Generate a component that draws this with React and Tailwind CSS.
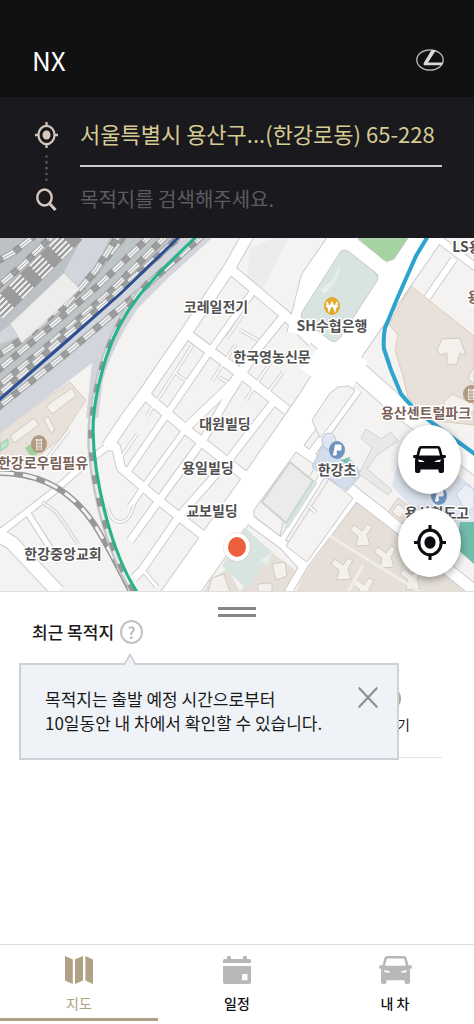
import { useState } from 'react';

// width, points
const STREETS = [
    [32, '165,614 260,480 312,405 350,345 428,232'],
    [15, '320,220 400,282'],
    [18, '300,322 348,362 400,408 480,468'],
    [26, '352,225 314,280 300,335'],
    [11, '251,230 230,267 186,333 144,394 125,420 107,447'],
    [6, '107,447 88,461 53,492 -4,536'],
    [9, '228,267 284,314 312,342'],
    [9, '186,333 210,351 240,373 287,410'],
    [9, '144,394 183,427 227,462 250,480'],
    [8, '108,446 116,447 121,468 157,499 205,537'],
    [6, '254,290 210,351 167,414 126,474'],
    [8, '284,316 254,353 232,384 187,427'],
    [5, '187,427 145,485 130,507'],
    [7, '254,355 226,400 203,440 160,499 130,541'],
    [7, '275,400 227,462 180,515 142,570 134,578'],
    [3, '142,569 157,587'],
    [11, '284,438 322,466 357,495 401,529 451,572 476,592'],
    [9, '246,517 284,545 304,567'],
    [7, '357,495 304,565 286,596'],
    [5, '322,476 279,545'],
    [13, '-6,532 12,543 58,592'],
    [5, '27,512 59,562'],
    [7, '437,238 480,270'],
    [6, '454,259 427,298'],
    [7, '358,390 326,434 304,462'],
    [8, '322,414 302,440'],
];

const LANES = [
    '192,346 147,416',
    '174,372 186,381',
    '137,434 118,462',
    '236,344 212,381',
    '272,360 246,400',
    '283,372 264,398',
    '258,340 240,330',
    '69,430 44,462',
    '230,384 219,377',
    '247,308 227,338',
];

// side tracks of the rail yard
const TRACKS = [
    'M-4 409 L62 357 L130 300 L202 236',
    'M-4 388 L50 344 L110 292 L166 236',
    'M-4 372 L42 334 L100 284 L150 236',
    'M-4 357 L30 334 L84 286 L124 236',
    'M-4 397 L60 341 L112 297 L178 238',
    'M60 312 L96 270 L118 236',
    'M-4 288 L22 266 L52 236',
    'M-4 262 L14 252 L34 236',
];

const LABELS = [
    { text: '코레일전기', x: 216, y: 312 },
    { text: 'SH수협은행', x: 332, y: 331 },
    { text: '한국영농신문', x: 272, y: 362 },
    { text: '대원빌딩', x: 225, y: 429 },
    { text: '용일빌딩', x: 208, y: 473 },
    { text: '교보빌딩', x: 212, y: 516 },
    { text: '한강초', x: 337, y: 475 },
    { text: '한강중앙교회', x: 63, y: 559 },
    { text: '용산철도고', x: 437, y: 518 },
    { text: 'LS용', x: 467, y: 252 },
    { text: '용산센트럴파크', x: 426, y: 418, brown: true },
    { text: '한강로우림필유', x: 43, y: 468, brown: true },
    { text: '용', x: 474, y: 302, brown: true },
];

const TOWERS = [
    [362, 536], [386, 558], [343, 570], [412, 580], [364, 590],
];

function TargetIcon({ className }) {
    return (
        <svg viewBox="0 0 24 26" preserveAspectRatio="none" className={className} fill="none" stroke="currentColor" aria-hidden="true">
            <ellipse cx="12" cy="13" rx="8.400" ry="9.200" strokeWidth="2.300" />
            <ellipse cx="12" cy="13" rx="4.200" ry="4.600" fill="currentColor" stroke="none" />
            <path d="M12 0v4M12 22v4M0 13h4M20 13h4" strokeWidth="2.300" />
        </svg>
    );
}

function CarIcon({ className }) {
    return (
        <svg viewBox="0 0 33 27" preserveAspectRatio="none" className={className} fill="currentColor" aria-hidden="true">
            <path
                fillRule="evenodd"
                d="M8 0H25Q27 0 27.600 2L29.500 9H32Q33 9 33 10.500T31.500 12.200H30.500L31 14V25Q31 27 29 27H27.500Q25.500 27 25.500 25V23.500H7.500V25Q7.500 27 5.500 27H4Q2 27 2 25V14L2.500 12.200H1.500Q0 12 0 10.500T1 9H3.500L5.400 2Q6 0 8 0ZM8.600 2.400Q8 2.400 7.800 3.200L6 9.400H27L25.200 3.200Q25 2.400 24.400 2.400ZM5 13.400L6 16H11.500Q11 14 5 13.400ZM28 13.400Q22 14 21.500 16H27Z"
            />
        </svg>
    );
}

function SearchIcon() {
    return (
        <svg viewBox="0 0 21 23" className="h-[23px] w-[21px]" fill="none" stroke="currentColor" aria-hidden="true">
            <ellipse cx="8.500" cy="9.500" rx="7.200" ry="8" strokeWidth="2.400" />
            <path d="M13.500 15.500L19.500 22" strokeWidth="3" />
        </svg>
    );
}

function MapIcon() {
    return (
        <svg viewBox="0 0 28 28" className="h-7 w-7" fill="currentColor" aria-hidden="true">
            <path d="M0 0L7.800 3.500V28L0 24.500ZM10 3.500L18 0V24.500L10 28ZM20.400 0L28 3.500V28L20.400 24.500Z" />
        </svg>
    );
}

function CalendarIcon() {
    return (
        <svg viewBox="0 0 28 28" className="h-7 w-7" fill="currentColor" aria-hidden="true">
            <path d="M1.500 3H4V1Q4 0 5 0H7Q8 0 8 1V3H20V1Q20 0 21 0H23Q24 0 24 1V3H26.500Q28 3 28 4.500V7H0V4.500Q0 3 1.500 3Z" />
            <path fillRule="evenodd" d="M0 10H28V26Q28 28 26 28H2Q0 28 0 26ZM19 18V24.200H24.500V18Z" />
        </svg>
    );
}

function LexusLogo() {
    return (
        <svg viewBox="0 0 28 22" className="h-[22px] w-7" fill="none" role="img" aria-label="Lexus">
            <ellipse cx="14" cy="11" rx="13.200" ry="10.200" stroke="#bdbdbd" strokeWidth="1.300" />
            <path d="M15.500 1L20 1.300L12 13.500H26.800L26 16.200H8Q7 15.500 8 13.500Z" fill="#d9d9d9" />
        </svg>
    );
}

function StreetMap() {
    return (
        <svg viewBox="0 238 474 353" className="block w-full" role="img" aria-label="지도">
            <rect x="0" y="238" width="474" height="353" fill="#f4f3f2" />

            {/* ground areas */}
            <path d="M250 248L274 238L289 238L276 262L262 291L247 280Z" fill="#ececeb" />
            <path d="M0 433L22 416L70 382L86 400L62 437L22 470L0 474Z" fill="#e7e1da" stroke="#decfc0" />
            <path d="M411 286L474 336V425L436 421L408 398L403 376L395 350L398 335L389 324Z" fill="#e7e1da" stroke="#decbb8" />
            <path d="M359 498L401 533L456 580L468 592H296L304 574Z" fill="#e5dfd8" />
            <path d="M266 548L298 572L286 592H240Z" fill="#e5dfd8" />
            <path d="M210 580L228 568L240 592H204Z" fill="#e5dfd8" />

            {STREETS.map(([w, pts]) => (
                <polyline key={pts} points={pts} fill="none" stroke="#cdcdcd" strokeWidth={w + 2} strokeLinejoin="round" />
            ))}
            {LANES.map((pts) => (
                <polyline key={pts} points={pts} fill="none" stroke="#d4d4d4" strokeWidth="4" />
            ))}
            {LANES.map((pts) => (
                <polyline key={pts} points={pts} fill="none" stroke="#fafafa" strokeWidth="2" />
            ))}
            {STREETS.map(([w, pts]) => (
                <polyline key={pts} points={pts} fill="none" stroke="#fff" strokeWidth={w} strokeLinejoin="round" />
            ))}
            <path d="M329 336L368 362L344 400L300 368Z" fill="#fff" />

            {/* parks */}
            <path d="M341 251Q344 249 348 251L376 273Q379 277 377 281L340 338Q335 344 330 340L303 320Q300 316 302 312Z" fill="#d8e4df" stroke="#c9c9c9" />
            <path d="M341 264L332 280L320 290L324 294L333 286L338 277Z" fill="#e6edea" />
            <path d="M358 238L384 260Q389 262 394 259L408 238Z" fill="#a5d3a1" stroke="#b8cbb5" />
            <path d="M244 527L272 552L247 589L222 566Z" fill="#d8e4df" />
            <path d="M272 552L260 560L268 566Z" fill="#e6edea" />

            {/* plots along the main road */}
            <path d="M338 387L349 386L355 391L331 424L320 438L312 420L330 393Z" fill="#f4f3f2" stroke="#c9c9c9" strokeLinejoin="round" />
            <path d="M296 452L316 466L285 514L280 536L254 516V510Z" fill="#f4f3f2" stroke="#c9c9c9" />
            <path d="M290 462L313 481L286 523L262 502Z" fill="#ebebea" stroke="#c9d6d0" strokeWidth="2" />
            <path d="M316 482L286 528" stroke="#d5e3dd" strokeWidth="4" />
            <path d="M329 479L353 498L307 562L286 546Z" fill="#f4f3f2" stroke="#c9c9c9" />
            <path d="M309 506L316 513" stroke="#cdcdcd" strokeWidth="4" />
            <path d="M309 506L316 513" stroke="#fff" strokeWidth="2" />

            {/* schools */}
            <path d="M322 446L362 474L347 491L312 467Z" fill="#d3dcea" stroke="#bfcbdb" />
            <ellipse cx="329" cy="441" rx="7" ry="8" fill="#dfe6ef" stroke="#b9c8dd" />
            <path d="M340 464L349 457L361 472L354 480Z" fill="#c6d3e6" />
            <path d="M341 460L350 457L347 465Z" fill="#79c2ad" />
            <path d="M366 429L381 439L391 432L398 441L377 455L367 469L392 490L388 495L359 474L372 448L361 438Z" fill="#e8e8e7" stroke="#d2d2d2" />
            <path d="M404 440L452 470L474 488V540L458 548L420 516L392 486Z" fill="#dde4ee" />
            <path d="M456 494L466 484L474 490V508L466 512Z" fill="#eaf0f5" stroke="#c3cfe0" />
            <path d="M460 522H474V564L456 548Z" fill="#72bcac" />
            <path d="M398 498L412 508L402 524L388 512Z" fill="#e7e1da" stroke="#d8cfc5" />
            <path d="M398 504L406 510L400 518L392 512Z" fill="#f4f1ee" stroke="#d8cfc5" />

            {/* buildings */}
            <g fill="#f4f1ec" stroke="#d3cbc2">
                <path d="M442 339L460 338L464 350L466 356L460 353L457 364L447 365L447 353L440 355L437 350Z" />
                <path d="M474 366L468 378L474 384Z" />
                <path d="M444 402L452 394L474 404V412H444Z" />
                <path d="M46 406L72 388L76 396L52 414Z" />
                <path d="M10 436L34 418L39 425L14 443Z" />
                <path d="M44 420L48 416L55 430L51 433Z" />
                <path d="M272 564L285 562L287 576L276 580Z" />
                <path d="M258 584L272 583V592H258Z" />
                <path d="M212 578L224 574L230 592H208Z" />
                {TOWERS.map(([x, y]) => (
                    <path
                        key={x}
                        d={`M${x - 6} ${y + 10}L${x - 4} ${y}L${x - 12} ${y - 6}L${x - 8} ${y - 11}L${x} ${y - 5}L${x + 5} ${y - 12}L${x + 10} ${y - 10}L${x + 5} ${y - 1}L${x + 8} ${y + 9}Z`}
                    />
                ))}
            </g>
            <path d="M330 536L420 592" stroke="#f0ece7" strokeWidth="3" />
            <path d="M363 565L348 592" stroke="#f0ece7" strokeWidth="3" />
            <path d="M0 444L8 439V446L0 451Z" fill="#bfe3cd" stroke="#92cdaa" />
            <path d="M25 448L34 442L42 450L32 458Z" fill="#a2cfa0" />
            <path d="M42 502L56 512L66 526L78 544" fill="none" stroke="#d4d4d4" strokeWidth="4" />
            <path d="M42 502L56 512L66 526L78 544" fill="none" stroke="#f4f3f2" strokeWidth="2" />
            <path d="M108 508Q112 523 121 522T134 505" fill="none" stroke="#d4d4d4" strokeWidth="4" />
            <path d="M108 508Q112 523 121 522T134 505" fill="none" stroke="#f8f8f8" strokeWidth="2" />

            {/* rail yard */}
            <path d="M0 238H212L166 280L138 308Q113 345 103 380L98 418H86L92 363L0 433Z" fill="#d2d5db" />
            <path d="M0 238H82L64 272L10 325L0 332Z" fill="#bcc1c5" />
            <path d="M110 238H182L60 346L0 390V344L40 328L84 290Z" fill="#bfc4c7" />
            <path d="M-4 312L76 232" stroke="#9b9b9b" strokeWidth="20" />
            <g stroke="#f3f3f3" strokeWidth="2" strokeDasharray="16 12" fill="none">
                <path d="M-10 306L70 226" />
                <path d="M-7 309L73 229" />
                <path d="M-4 312L76 232" />
                <path d="M-1 315L79 235" />
                <path d="M2 318L82 238" />
            </g>
            {TRACKS.map((d) => (
                <g key={d} fill="none">
                    <path d={d} stroke="#afb3b5" strokeWidth="7" />
                    <path d={d} stroke="#999" strokeWidth="7" strokeDasharray="8 13" />
                    <path d={d} stroke="#f4f4f4" strokeWidth="4" strokeDasharray="13 8" strokeDashoffset="13" />
                    <path d={d} stroke="#aaa" strokeWidth="1" />
                </g>
            ))}
            <path d="M76 262L98 238H110L90 268L72 288L60 276Z" fill="#d2d5db" />
            <path d="M10 324L64 273L80 289L22 343Z" fill="#ededeb" stroke="#c8ccce" />
            <path d="M-2 401L60 347L120 294L180 236" fill="none" stroke="#2b4f92" strokeWidth="3" />

            {/* branch line */}
            <g fill="none">
                <path d="M0 473Q58 473 92 521Q104 538 131 592" stroke="#979797" strokeWidth="6" />
                <path d="M0 473Q58 473 92 521Q104 538 131 592" stroke="#f4f4f4" strokeWidth="3" strokeDasharray="14 9" />
                <path d="M148 282C122 312 106 345 98 382C91 412 90 432 91 448C94 490 108 550 134 592" stroke="#c4c7cb" strokeWidth="7" />
                <path d="M148 282C122 312 106 345 98 382C91 412 90 432 91 448C94 490 108 550 134 592" stroke="#979797" strokeWidth="5" strokeDasharray="9 14" />
                <path d="M148 282C122 312 106 345 98 382C91 412 90 432 91 448C94 490 108 550 134 592" stroke="#eee" strokeWidth="2" strokeDasharray="14 9" strokeDashoffset="14" />
                <path d="M197 236C152 279 122 306 106 358C96 390 93 412 93 430C94 478 110 550 137 592" stroke="#27b38a" strokeWidth="3" />
                <path d="M428 236L416 256L397 299L385 328Q383 338 384 349L391 370L401 394Q410 406 431 422L476 455" stroke="#2fa3cf" strokeWidth="4" />
            </g>

            {/* place markers */}
            <ellipse cx="332" cy="306" rx="8" ry="9" fill="#e3a92c" />
            <path d="M327 302L329 310L332 303L335 310L337 302M326 306H338" fill="none" stroke="#fff" strokeWidth="2" />
            <g fill="#6f93bf">
                <ellipse cx="337" cy="450" rx="8" ry="9" />
                <ellipse cx="439" cy="496" rx="8" ry="9" />
            </g>
            <g stroke="#fff" strokeWidth="1" fill="#fff">
                <path d="M335 445H341V450H336V455H333M336 455V445" />
                <path d="M437 491H443V496H438V501H435M438 501V491" />
            </g>
            <g fill="#b29a83">
                <ellipse cx="39" cy="444" rx="8" ry="9" />
                <ellipse cx="471" cy="394" rx="8" ry="9" />
            </g>
            <g fill="#fff">
                <rect x="36" y="439" width="6" height="11" />
                <rect x="468" y="389" width="6" height="11" />
            </g>
            <g stroke="#b29a83" strokeWidth="1">
                <path d="M36 442H42M36 445H42M36 448H42M38 439V450M40 439V450" />
                <path d="M468 392H474M468 395H474M468 398H474M470 389V400M472 389V400" />
            </g>

            <g
                className="font-bold"
                fontSize="14"
                textAnchor="middle"
                stroke="#fff"
                strokeWidth="3"
                strokeLinejoin="round"
                paintOrder="stroke"
            >
                {LABELS.map((l) => (
                    <text key={l.text} x={l.x} y={l.y} fill={l.brown ? '#7a6259' : '#505050'}>
                        {l.text}
                    </text>
                ))}
            </g>

            {/* current position */}
            <ellipse cx="237" cy="547" rx="14" ry="15" fill="#e8603c" opacity="0.15" />
            <ellipse cx="237" cy="547" rx="13" ry="14" fill="#fff" />
            <ellipse cx="237" cy="547" rx="9" ry="10" fill="#ec5f3c" />
        </svg>
    );
}

const TABS = [
    { id: 'map', label: '지도', icon: <MapIcon /> },
    { id: 'schedule', label: '일정', icon: <CalendarIcon /> },
    { id: 'car', label: '내 차', icon: <CarIcon className="h-7 w-[33px]" /> },
];

export default function App() {
    const [tab, setTab] = useState('map');
    const [showTip, setShowTip] = useState(true);
    const [query, setQuery] = useState('');

    return (
        <div className="flex min-h-screen flex-col bg-white font-['Noto_Sans_CJK_KR',sans-serif] text-[#1a1a1a]">
            <header className="flex items-center justify-between bg-[#111] pt-[42px] pr-[30px] pb-[19px] pl-8">
                <h1 className="text-[26px] leading-9 text-white">NX</h1>
                <LexusLogo />
            </header>

            <form className="flex gap-[22px] bg-[#1a191e] pr-8 pb-2 pl-[35px]" onSubmit={(e) => e.preventDefault()}>
                <div className="flex flex-col items-center pt-[25px] text-[#d5c9bd]">
                    <TargetIcon className="h-[26px] w-[23px]" />
                    <svg viewBox="0 0 3 26" className="my-[7px] h-[26px] w-[3px]" aria-hidden="true">
                        <path d="M1.500 1.500V26" stroke="#5d5b61" strokeWidth="2.500" strokeLinecap="round" strokeDasharray="0.100 5.700" />
                    </svg>
                    <SearchIcon />
                </div>
                <div className="min-w-0 flex-1">
                    <input
                        type="text"
                        aria-label="출발지"
                        defaultValue="서울특별시 용산구...(한강로동) 65-228"
                        className="h-[70px] w-full border-b-2 border-[#cfcbd3] pt-1 text-[22px] text-[#d6cb93] outline-none"
                    />
                    <input
                        type="text"
                        aria-label="목적지"
                        value={query}
                        onChange={(e) => setQuery(e.target.value)}
                        placeholder="목적지를 검색해주세요."
                        className="h-[63px] w-full text-[20px] text-[#d6cb93] outline-none placeholder:text-[#5d5c60]"
                    />
                </div>
            </form>

            <main className="flex flex-1 flex-col">
                <div className="relative overflow-hidden">
                    <StreetMap />
                    <div className="absolute right-[13px] bottom-[14px] flex flex-col gap-[14px] text-[#0c0b10]">
                        <button type="button" aria-label="내 차 위치" className="flex h-[69px] w-[63px] items-center justify-center rounded-[50%] bg-white shadow-[0_2px_8px_rgba(0,0,0,0.4)]">
                            <CarIcon className="h-[27px] w-[33px]" />
                        </button>
                        <button type="button" aria-label="현재 위치" className="flex h-[69px] w-[63px] items-center justify-center rounded-[50%] bg-white shadow-[0_2px_8px_rgba(0,0,0,0.4)]">
                            <TargetIcon className="h-[35px] w-8" />
                        </button>
                    </div>
                </div>

                <section className="relative flex-1 border-t border-[#dedede] pt-[15px]">
                    <div className="mx-auto h-[10px] w-[38px] border-y-3 border-[#868686]" />
                    <div className="mt-[3px] flex items-center gap-[6px] px-8">
                        <h2 className="text-[17px] leading-6 font-medium">최근 목적지</h2>
                        <button
                            type="button"
                            aria-label="도움말"
                            onClick={() => setShowTip(!showTip)}
                            className="flex h-6 w-[23px] items-center justify-center rounded-[50%] border-2 border-[#c2c2c2] text-[16px] leading-5 font-medium text-[#b5b5b5]"
                        >
                            ?
                        </button>
                    </div>

                    <div className="relative">
                        <div className="mx-8 flex h-[114px] flex-col items-end border-b border-[#e3e3e3] pt-[43px] pr-8 text-[14px] leading-5">
                            <span className="mr-[9px] h-[23px] w-[22px] rounded-[50%] bg-[#b5a58c]" />
                            <span className="mt-1">기</span>
                        </div>

                        {showTip && (
                            <div className="absolute top-[19px] right-[75px] left-[19px] flex h-[97px] items-start justify-between border-2 border-[#cdd0d7] bg-[#eff3f7] pt-[22px] pr-[19px] pl-6">
                                <svg viewBox="0 0 14 13" className="absolute -top-[12px] left-[102px] h-[13px] w-[14px]" aria-hidden="true">
                                    <path d="M1 12L7 1.500L13 12V13H1Z" fill="#eff3f7" />
                                    <path d="M1 12L7 1.500L13 12" fill="none" stroke="#c6c9d0" strokeWidth="1.500" />
                                </svg>
                                <p className="text-[17px] leading-6">
                                    목적지는 출발 예정 시간으로부터
                                    <br />
                                    10일동안 내 차에서 확인할 수 있습니다.
                                </p>
                                <button type="button" aria-label="닫기" onClick={() => setShowTip(false)}>
                                    <svg viewBox="0 0 20 21" className="h-[21px] w-5" fill="none" stroke="#919191" strokeWidth="2.300" strokeLinecap="round">
                                        <path d="M1.300 1.300L18.700 19.700M18.700 1.300L1.300 19.700" />
                                    </svg>
                                </button>
                            </div>
                        )}
                    </div>
                </section>
            </main>

            <nav className="grid grid-cols-3 border-t border-[#dedede] pb-[3px]">
                {TABS.map((t) => (
                    <button
                        key={t.id}
                        type="button"
                        onClick={() => setTab(t.id)}
                        className={`flex flex-col items-center gap-[7px] border-b-3 pt-[11px] pb-[3px] text-[14px] leading-6 ${tab === t.id ? 'border-[#b0a085]' : 'border-transparent'}`}
                    >
                        <span className={tab === t.id ? 'text-[#b0a085]' : 'text-[#b7b8ba]'}>{t.icon}</span>
                        <span className={tab === t.id ? 'text-[#b0a085]' : 'font-medium text-[#111]'}>{t.label}</span>
                    </button>
                ))}
            </nav>
        </div>
    );
}
